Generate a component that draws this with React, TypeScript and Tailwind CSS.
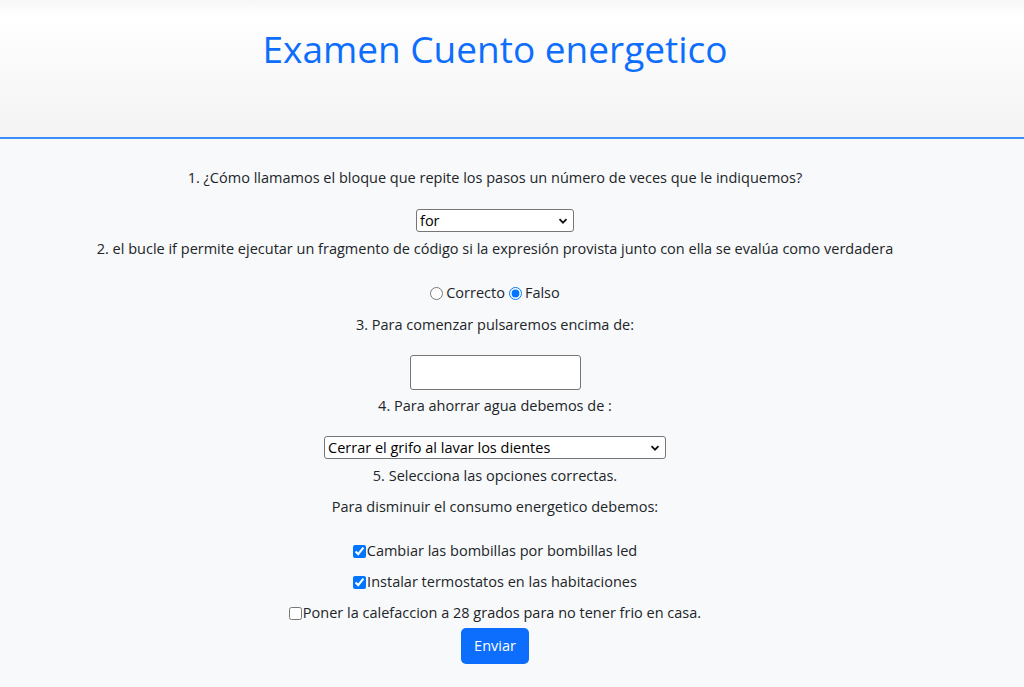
import React, { useState } from 'react';

function Chevron() {
  return (
    <svg width="10" height="10" viewBox="0 0 10 10" className="pointer-events-none absolute right-[6px] top-1/2 -translate-y-1/2">
      <path d="M1.5 3.2 L5 6.7 L8.5 3.2" fill="none" stroke="#111" strokeWidth="1.8" />
    </svg>
  );
}

function Select({ width, options, value }: { width: string; options: string[]; value: string }) {
  const [val, setVal] = useState(value);
  return (
    <div className={`relative inline-block ${width}`}>
      <select
        value={val}
        onChange={(e) => setVal(e.target.value)}
        className="w-full h-[23px] appearance-none bg-white border border-[#767676] rounded-[3px] pl-[3px] pr-5 text-[14.5px] leading-[21px] text-black"
      >
        {options.map((o) => (
          <option key={o}>{o}</option>
        ))}
      </select>
      <Chevron />
    </div>
  );
}

export default function App() {
  const [answer2, setAnswer2] = useState('falso');
  const [checks, setChecks] = useState([true, true, false]);
  const options = [
    'Cambiar las bombillas por bombillas led',
    'Instalar termostatos en las habitaciones',
    'Poner la calefaccion a 28 grados para no tener frio en casa.',
  ];

  return (
    <div className="min-h-[687px] bg-[#f8f9fa] text-[#212529] text-[14.5px] leading-6" style={{ fontFamily: '"Open Sans", "Noto Sans", sans-serif' }}>
      <header className="h-[139px] border-b-2 border-[#3b8cff] bg-gradient-to-b from-[#f7f7f7] via-white via-[12%] to-[#f3f3f3]">
        <div className="w-[990px] pt-[27px] text-center">
          <h1 className="text-[37px] leading-[44px] text-[#0d6efd] font-medium">Examen Cuento energetico</h1>
        </div>
      </header>

      <form className="w-[990px] flex flex-col items-center text-center pt-[27px]" onSubmit={(e) => e.preventDefault()}>
        <p>1. ¿Cómo llamamos el bloque que repite los pasos un número de veces que le indiquemos?</p>
        <div className="mt-[19px]">
          <Select width="w-[158px]" value="for" options={['for', 'while', 'repeat']} />
        </div>
        <p className="mt-[4px]">2. el bucle if permite ejecutar un fragmento de código si la expresión provista junto con ella se evalúa como verdadera</p>

        <div className="mt-[20px] flex items-center gap-[3px]">
          <input type="radio" name="q2" checked={answer2 === 'correcto'} onChange={() => setAnswer2('correcto')} className="w-[13px] h-[13px] accent-[#0075ff]" />
          <label className="mr-[1px]">Correcto</label>
          <input type="radio" name="q2" checked={answer2 === 'falso'} onChange={() => setAnswer2('falso')} className="w-[13px] h-[13px] accent-[#0075ff]" />
          <label>Falso</label>
        </div>

        <p className="mt-[8px]">3. Para comenzar pulsaremos encima de:</p>
        <input type="text" className="mt-[18px] w-[171px] h-[35px] bg-white border border-[#767676] rounded-[3px] px-2" />

        <p className="mt-[4px]">4. Para ahorrar agua debemos de :</p>
        <div className="mt-[18px]">
          <Select
            width="w-[342px]"
            value="Cerrar el grifo al lavar los dientes"
            options={['Cerrar el grifo al lavar los dientes', 'Dejar el grifo abierto', 'Llenar la bañera']}
          />
        </div>

        <p className="mt-[4px]">5. Selecciona las opciones correctas.</p>
        <p className="mt-[7px]">Para disminuir el consumo energetico debemos:</p>

        <div className="mt-[20px] flex flex-col items-center gap-[7px]">
          {options.map((o, i) => (
            <label key={o} className="flex items-center">
              <input
                type="checkbox"
                checked={checks[i]}
                onChange={() => setChecks(checks.map((c, j) => (j === i ? !c : c)))}
                className="w-[13px] h-[13px] mr-[1px] accent-[#0075ff]"
              />
              {o}
            </label>
          ))}
        </div>

        <button type="submit" className="mt-[3px] bg-[#0d6efd] text-white rounded-[5px] px-[13px] h-[36px] text-[14.5px]">
          Enviar
        </button>
      </form>
    </div>
  );
}
